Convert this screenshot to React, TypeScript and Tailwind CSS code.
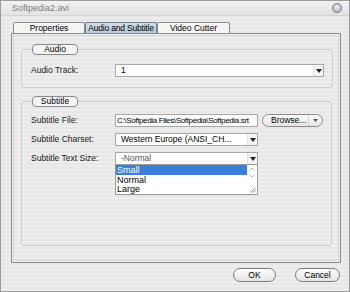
import React from 'react'

const FONT = { fontFamily: '"Liberation Sans", Arial, sans-serif' }

function Arrow() {
  return (
    <svg width="6" height="4" viewBox="0 0 6 4">
      <path d="M0 0h6L3 4z" fill="#222" />
    </svg>
  )
}

function Combo({ value, width, dim }: { value: string; width: string; dim?: boolean }) {
  return (
    <div className={`flex h-[13px] items-center border border-[#a8a8a8] bg-white ${width}`}>
      <span className={`flex-1 truncate pl-[5px] leading-none ${dim ? 'text-[#555]' : 'text-black'}`}>{value}</span>
      <span className="flex h-full w-[10px] items-center justify-center border-l border-[#e2e2e2] bg-[#f4f4f4]">
        <Arrow />
      </span>
    </div>
  )
}

function Pill({ label }: { label: string }) {
  return (
    <legend className="ml-[1px] flex h-[11px] w-[46px] items-center justify-center rounded-[4px] border border-[#8a8a8a] bg-[#f6f6f6] leading-none text-black">
      {label}
    </legend>
  )
}

function Row({ label, children }: { label: string; children: React.ReactNode }) {
  return (
    <div className="flex h-[13px] items-center">
      <span className="w-[84px] whitespace-nowrap leading-none text-[#1a1a1a]">{label}</span>
      {children}
    </div>
  )
}

export default function App() {
  return (
    <div
      className="flex h-[292px] w-[350px] flex-col border border-[#9c9c9c] bg-[repeating-linear-gradient(0deg,#ededed_0px,#ededed_2px,#e7e7e7_2px,#e7e7e7_4px)] text-[8.5px]"
      style={FONT}
    >
      {/* title bar */}
      <div className="flex h-[15px] items-center justify-between border-b border-[#d4d4d4] bg-[linear-gradient(#f2f2f2,#e2e2e2)] pl-[11px] pr-[7px]">
        <span className="text-[9px] leading-none text-[#7c7c7c]">Softpedia2.avi</span>
        <span className="h-[10px] w-[10px] rounded-full border border-[#777] bg-[radial-gradient(circle_at_50%_35%,#eef2f7,#9ea8b4)]" />
      </div>

      {/* tabs */}
      <div className="ml-[12px] mt-[6px] flex h-[11px]">
        <div className="flex w-[72px] items-center justify-center rounded-t-[2px] border border-b-0 border-[#8a8a8a] bg-[#f4f4f4] leading-none text-black">
          Properties
        </div>
        <div className="flex w-[72px] items-center justify-center rounded-t-[2px] border border-b-0 border-[#6f7f93] bg-[linear-gradient(#d3dde9,#b9c8da)] leading-none tracking-[-0.2px] text-black">
          Audio and Subtitle
        </div>
        <div className="flex w-[73px] items-center justify-center rounded-t-[2px] border border-b-0 border-[#8a8a8a] bg-[#f4f4f4] leading-none text-black">
          Video Cutter
        </div>
      </div>

      {/* panel */}
      <div className="ml-[10px] h-[230px] w-[330px] border border-[#8d8d8d] p-[1px]">
        <div className="flex h-full flex-col gap-[8px] border border-[#d8d8d8] px-[7px] pt-[8px]">
          <fieldset className="rounded-[3px] border border-[#cfcfcf] pb-[10px] pl-[9px] pr-[8px]">
            <Pill label="Audio" />
            <div className="mt-[9px]">
              <Row label="Audio Track:">
                <Combo value="1" width="w-[209px]" />
              </Row>
            </div>
          </fieldset>

          <fieldset className="flex-1 rounded-[3px] border border-[#cfcfcf] pl-[9px] pr-[8px]">
            <Pill label="Subtitle" />
            <div className="mt-[7px] flex flex-col gap-[6px]">
              <Row label="Subtitle File:">
                <div className="flex h-[13px] w-[143px] items-center overflow-hidden border border-[#a8a8a8] bg-white pl-[1px] leading-none text-black">
                  <span className="whitespace-nowrap text-[8px] tracking-[-0.35px]">C:\Softpedia Files\Softpedia\Softpedia.srt</span>
                </div>
                <div className="ml-[4px] flex h-[13px] w-[61px] items-center rounded-full border border-[#8a8a8a] bg-[linear-gradient(#fbfbfb,#e6e6e6)] leading-none">
                  <span className="flex-1 pl-[8px] text-black">Browse...</span>
                  <span className="flex h-full w-[14px] items-center justify-center border-l border-[#cfcfcf]">
                    <svg width="5" height="3" viewBox="0 0 5 3">
                      <path d="M0 0h5L2.5 3z" fill="#555" />
                    </svg>
                  </span>
                </div>
              </Row>
              <Row label="Subtitle Charset:">
                <Combo value="Western Europe (ANSI_CH..." width="w-[143px]" />
              </Row>
              <Row label="Subtitle Text Size:">
                <div className="relative">
                  <Combo value="-Normal" width="w-[143px]" dim />
                  <div className="absolute left-0 top-[12px] z-10 flex h-[31px] w-[143px] border border-[#9a9a9a] bg-white text-[9px] leading-none">
                    <div className="flex flex-1 flex-col">
                      <span className="flex h-[10px] items-center bg-[#3a7fe0] pl-[1px] text-white">Small</span>
                      <span className="flex h-[10px] items-center pl-[1px] text-black">Normal</span>
                      <span className="flex h-[9px] items-center pl-[1px] text-black">Large</span>
                    </div>
                    <div className="relative flex w-[10px] flex-col items-center pt-[2px]">
                      <svg width="6" height="4" viewBox="0 0 6 4">
                        <path d="M0.5 3.5L3 1l2.5 2.5" fill="none" stroke="#b8b8b8" />
                      </svg>
                      <svg className="mt-[3px]" width="6" height="4" viewBox="0 0 6 4">
                        <path d="M0.5 0.5L3 3l2.5-2.5" fill="none" stroke="#b8b8b8" />
                      </svg>
                      <svg className="absolute bottom-[1px] right-[1px]" width="6" height="6" viewBox="0 0 6 6">
                        <path d="M5.5 0.5L0.5 5.5M5.5 2.5L2.5 5.5M5.5 4.5L4.5 5.5" stroke="#999" />
                      </svg>
                    </div>
                  </div>
                </div>
              </Row>
            </div>
          </fieldset>
          <div className="h-[6px]" />
        </div>
      </div>

      {/* buttons */}
      <div className="mt-[5px] flex justify-end gap-[19px] pr-[9px]">
        <button className="flex h-[14px] w-[43px] items-center justify-center rounded-full border border-[#7e7e7e] bg-[linear-gradient(#fdfdfd,#e4e4e4)] leading-none text-black">
          OK
        </button>
        <button className="flex h-[14px] w-[45px] items-center justify-center rounded-full border border-[#7e7e7e] bg-[linear-gradient(#fdfdfd,#e4e4e4)] leading-none text-black">
          Cancel
        </button>
      </div>
    </div>
  )
}
